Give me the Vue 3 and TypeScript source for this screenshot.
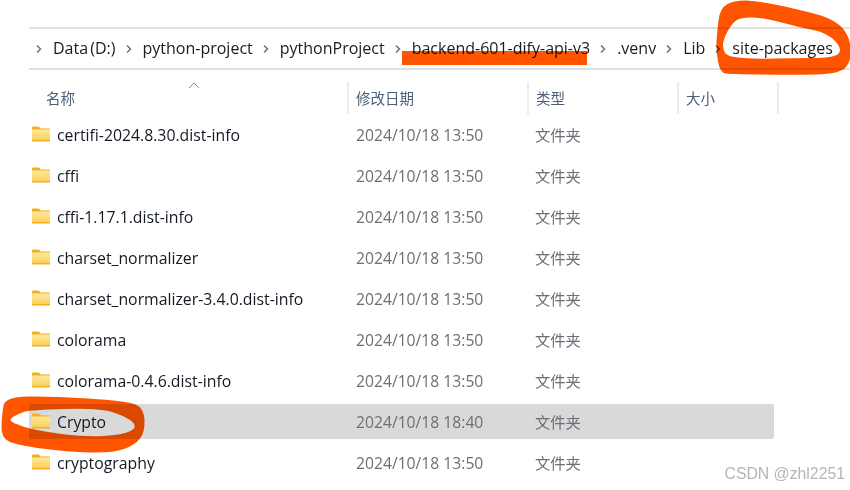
<script setup lang="ts">
type Row = { name: string; date: string; selected?: boolean };
const crumbs = ['Data (D:)', 'python-project', 'pythonProject', 'backend-601-dify-api-v3', '.venv', 'Lib', 'site-packages'];
const d = '2024/10/18 13:50';
const rows: Row[] = [
  { name: 'certifi-2024.8.30.dist-info', date: d },
  { name: 'cffi', date: d },
  { name: 'cffi-1.17.1.dist-info', date: d },
  { name: 'charset_normalizer', date: d },
  { name: 'charset_normalizer-3.4.0.dist-info', date: d },
  { name: 'colorama', date: d },
  { name: 'colorama-0.4.6.dist-info', date: d },
  { name: 'Crypto', date: '2024/10/18 18:40', selected: true },
  { name: 'cryptography', date: d },
];
const smooth = (p: number[][]): string => {
  const mid = (a: number[], b: number[]) => `${(a[0] + b[0]) / 2} ${(a[1] + b[1]) / 2}`;
  let s = `M${mid(p[p.length - 1], p[0])}`;
  p.forEach((pt, i) => {
    s += ` Q${pt[0]} ${pt[1]} ${mid(pt, p[(i + 1) % p.length])}`;
  });
  return s + 'Z';
};
const sitePath =
  smooth([[717,33],[720,8],[735,0],[758,1],[792,8],[832,18],[849,34],[852,60],[840,74],[792,75],[732,74],[720,73],[716,50]]) +
  smooth([[723,40],[732,23],[742,17],[765,18],[798,27],[828,33],[843,50],[833,58],[792,58],[758,59],[728,57],[723,50]]);
const cryptoPath =
  smooth([[2,414],[5,397],[50,396],[127,401],[144,408],[145,432],[135,445],[113,453],[67,452],[17,445],[1,438]]) +
  smooth([[9,419],[20,413],[30,410],[100,408],[127,417],[138,427],[123,435],[83,437],[33,430],[13,423]]);
</script>

<template>
  <div class="page">
    <nav class="address">
      <template v-for="c in crumbs" :key="c">
        <svg class="chev" width="14" height="14" viewBox="0 0 14 14">
          <path d="M5 3.500 L8.500 7 L5 10.500" fill="none" stroke="#737373" stroke-width="1.500" />
        </svg>
        <span class="crumb">{{ c }}</span>
      </template>
    </nav>

    <header class="head">
      <div class="col c-name">
        <span>名称</span>
        <svg class="caret" width="12" height="7" viewBox="0 0 12 7">
          <path d="M1 6 L6 1 L11 6" fill="none" stroke="#8a8a8a" stroke-width="1" />
        </svg>
      </div>
      <div class="col c-date">修改日期</div>
      <div class="col c-type">类型</div>
      <div class="col c-size">大小</div>
    </header>

    <div class="list">
      <div v-for="r in rows" :key="r.name" class="row" :class="{ selected: r.selected }">
        <div class="cell-name">
          <svg class="folder" width="20" height="16" viewBox="0 0 20 16">
            <defs>
              <linearGradient id="fg" x1="0" y1="0" x2="0" y2="1">
                <stop offset="0" stop-color="#ffe9a0" />
                <stop offset="1" stop-color="#fbd058" />
              </linearGradient>
            </defs>
            <path d="M1 1.500 Q1 0.500 2 0.500 H7.500 L10 2.500 H19 V15 Q19 15.500 18.500 15.500 H1.500 Q1 15.500 1 15 Z" fill="#f2b01e" />
            <rect x="1" y="3.500" width="18" height="10.500" fill="url(#fg)" />
          </svg>
          <span class="fname">{{ r.name }}</span>
        </div>
        <div class="cell-date">{{ r.date }}</div>
        <div class="cell-type">文件夹</div>
      </div>
    </div>

    <svg class="marks" width="850" height="490" viewBox="0 0 850 490">
      <g fill="#ff5500" fill-rule="evenodd">
        <path d="M402 51 H587 V65 H402 Z" />
        <path :d="sitePath" />
        <path :d="cryptoPath" />
      </g>
    </svg>

    <div class="watermark">CSDN @zhl2251</div>
  </div>
</template>

<style>
html, body { margin: 0; background: #fff; }
</style>

<style scoped>
.page {
  position: relative;
  width: 850px;
  height: 490px;
  overflow: hidden;
  background: #fff;
  padding: 27px 0 0 29px;
  box-sizing: border-box;
  font-family: "Open Sans", "Noto Sans CJK SC", sans-serif;
  font-size: 16px;
}
.address {
  height: 43px;
  box-sizing: border-box;
  border-top: 2px solid #e0e0e0;
  border-bottom: 2px solid #e0e0e0;
  display: flex;
  align-items: center;
  color: #1c1c1c;
  padding: 0 0 2px 3px;
}
.chev { flex: none; margin-top: 2px; }
.crumb { margin: 0 6px 0 7px; white-space: nowrap; word-spacing: -2px; }
.head {
  display: flex;
  height: 32px;
  margin-top: 12px;
  color: #4c607a;
}
.col {
  box-sizing: border-box;
  display: flex;
  align-items: center;
  border-right: 2px solid #ececec;
  position: relative;
  padding-left: 7px;
  padding-bottom: 2px;
  font-family: "Noto Sans CJK SC", sans-serif;
  font-size: 14.500px;
}
.c-name { width: 320px; padding-left: 17px; }
.c-date { width: 180px; }
.c-type { width: 150px; }
.c-size { width: 100px; }
.caret { position: absolute; left: 159px; top: 0; }
.list {
  padding-top: 3px;
  display: flex;
  flex-direction: column;
  gap: 6px;
}
.row {
  width: 745px;
  height: 35px;
  display: flex;
  align-items: center;
  border-radius: 2px;
}
.row.selected { background: #d9d9d9; }
.cell-name {
  width: 327px;
  display: flex;
  align-items: center;
  padding-left: 2px;
  box-sizing: border-box;
}
.folder { flex: none; margin-right: 6px; margin-top: -1px; }
.fname { color: #141a24; white-space: nowrap; font-size: 15.800px; }
.cell-date { width: 179px; color: #6b6f76; font-size: 15.700px; }
.cell-type { color: #6b6f76; font-family: "Noto Sans CJK SC", sans-serif; font-size: 15.300px; margin-top: -2px; }
.marks {
  position: absolute;
  left: 0;
  top: 0;
  mix-blend-mode: multiply;
  pointer-events: none;
}
.watermark {
  position: absolute;
  right: 5px;
  top: 465px;
  font-family: "Liberation Sans", sans-serif;
  font-size: 15.800px;
  color: #b5b5b5;
  text-shadow: 0 0 1px #fff;
}
</style>
